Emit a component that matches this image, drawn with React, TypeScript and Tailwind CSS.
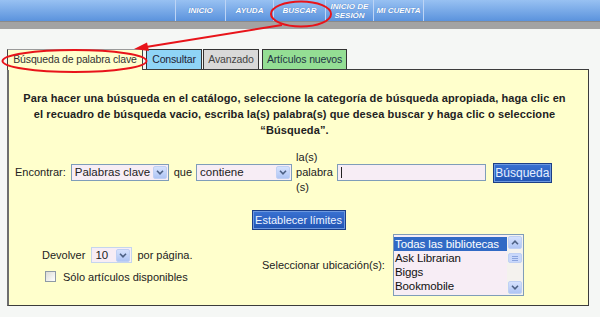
import React from 'react';

const NAV_ITEMS = [
  { key: 'inicio', lines: ['INICIO'], width: 'w-[50px]' },
  { key: 'ayuda', lines: ['AYUDA'], width: 'w-[48px]' },
  { key: 'buscar', lines: ['BUSCAR'], width: 'w-[52px]' },
  { key: 'sesion', lines: ['INICIO DE', 'SESIÓN'], width: 'w-[48px]' },
  { key: 'cuenta', lines: ['MI CUENTA'], width: 'w-[50px]' },
];

const LOCATIONS = ['Todas las bibliotecas', 'Ask Librarian', 'Biggs', 'Bookmobile'];

function Chevron({ up = false }: { up?: boolean }) {
  return (
    <svg width="8" height="5" viewBox="0 0 8 5">
      <path
        d={up ? 'M1 4.2 L4 1.2 L7 4.2' : 'M1 0.8 L4 3.8 L7 0.8'}
        fill="none"
        stroke="#4d6185"
        strokeWidth="1.6"
      />
    </svg>
  );
}

function ArrowBox({ up = false }: { up?: boolean }) {
  return (
    <span className="flex h-[13px] w-[14px] shrink-0 items-center justify-center rounded-[2px] border border-[#bfd0f4] bg-gradient-to-b from-[#d6e2fd] to-[#afc5f4]">
      <Chevron up={up} />
    </span>
  );
}

function Combo({ text, className }: { text: string; className: string }) {
  return (
    <div
      className={`flex h-[17px] items-center justify-between border border-[#7f9db9] bg-[#f7edf5] pl-[3px] pr-px text-[11.5px] text-[#222] ${className}`}
    >
      <span className="leading-none">{text}</span>
      <ArrowBox />
    </div>
  );
}

export default function App() {
  return (
    <div className="relative h-[317px] w-[600px] overflow-hidden bg-[#f5f7f5] font-['Liberation_Sans',Arial,sans-serif] text-[#222]">
      {/* top navigation */}
      <div className="flex h-[21px] bg-gradient-to-b from-[#98c1f2] to-[#5b93dd] pl-[175px]">
        {NAV_ITEMS.map(item => (
          <div
            key={item.key}
            className={`flex flex-col items-center justify-center border-l border-[#bdd4f5] text-[8px] font-bold italic leading-[9px] text-white [text-shadow:0_0_1px_#3d6fb8] ${item.width}`}
          >
            {item.lines.map(l => (
              <span key={l}>{l}</span>
            ))}
          </div>
        ))}
        <div className="border-l border-[#bdd4f5]" />
      </div>
      <div className="h-[8px] border-t border-[#8a8a8a] bg-[#a3a3a3]" />

      <div className="pl-[7px] pt-[20px]">
        {/* tabs */}
        <div className="flex h-[20px] items-stretch text-[10.5px] tracking-[-0.15px]">
          <div className="-mb-px flex w-[136px] items-center justify-center border-x border-t border-x-[#444] border-t-[#9a9a9a] bg-[#ffffcc] text-[#333]">
            Búsqueda de palabra clave
          </div>
          <div className="ml-[3px] flex w-[56px] items-center justify-center border-x border-t border-[#333] bg-[#8fd4f6] text-[#223]">
            Consultar
          </div>
          <div className="ml-[1px] flex w-[56px] items-center justify-center border-x border-t border-[#333] bg-[#d9d9d9] text-[#444]">
            Avanzado
          </div>
          <div className="ml-[3px] flex w-[85px] items-center justify-center border-x border-t border-[#333] bg-[#94de94] text-[#234]">
            Artículos nuevos
          </div>
        </div>

        {/* panel */}
        <div className="flex h-[237px] w-[582px] flex-col border border-l-2 border-[#3c3c3c] border-l-[#6e6e6e] bg-[#ffffcc]">
          <p className="mt-[20px] pr-[8px] text-center text-[11px] font-bold leading-[16px] tracking-[0.1px] text-[#222]">
            Para hacer una búsqueda en el catálogo, seleccione la categoría de búsqueda apropiada, haga clic en
            <br />
            el recuadro de búsqueda vacio, escriba la(s) palabra(s) que desea buscar y haga clic o seleccione
            <br />
            “Búsqueda”.
          </p>

          <div className="mt-[12px] flex items-center pl-[6px] text-[11px]">
            <span>Encontrar:</span>
            <Combo text="Palabras clave" className="ml-[5px] w-[98px]" />
            <span className="ml-[5px]">que</span>
            <Combo text="contiene" className="ml-[4px] w-[96px]" />
            <span className="ml-[4px] leading-[15px]">
              la(s)
              <br />
              palabra
              <br />
              (s)
            </span>
            <div className="ml-[4px] flex h-[17px] w-[149px] items-center border border-[#7f9db9] bg-[#f7edf5] pl-[3px]">
              <span className="h-[11px] w-px bg-[#222]" />
            </div>
            <button className="ml-[7px] h-[20px] w-[59px] border border-[#1c3f86] bg-gradient-to-b from-[#3a72d2] to-[#2154b3] text-[12px] leading-none text-[#e6efff] shadow-[inset_0_0_0_1px_#6c98e0]">
              Búsqueda
            </button>
          </div>

          <div className="mt-[15px] flex justify-center">
            <button className="h-[20px] w-[94px] border border-[#1c3f86] bg-gradient-to-b from-[#3a72d2] to-[#2154b3] text-[11px] leading-none text-[#eef4ff] shadow-[inset_0_0_0_1px_#6c98e0]">
              Establecer límites
            </button>
          </div>

          <div className="mt-[4px] flex items-center text-[11px]">
            <div className="ml-[33px] flex w-[220px] flex-col">
              <div className="mt-[2px] flex items-center">
                <span>Devolver</span>
                <div className="ml-[6px] flex h-[16px] w-[41px] items-center justify-between border border-[#c5d5ee] bg-[#f7edf5] pl-[3px] pr-px text-[11.5px]">
                  <span className="leading-none">10</span>
                  <ArrowBox />
                </div>
                <span className="ml-[5px]">por página.</span>
              </div>
              <div className="mt-[5px] flex items-center pl-[3px]">
                <span className="h-[11px] w-[11px] border border-[#8e9aa6] bg-gradient-to-br from-[#dcdcd6] to-white" />
                <span className="ml-[7px]">Sólo artículos disponibles</span>
              </div>
            </div>
            <span className="w-[127px]">Seleccionar ubicación(s):</span>
            <div className="ml-[4px] flex h-[62px] w-[131px] border border-[#7f9db9] bg-[#f7edf5]">
              <div className="flex min-w-0 flex-1 flex-col pt-[2px] text-[11.5px] leading-[14px] tracking-[-0.1px]">
                {LOCATIONS.map((loc, i) => (
                  <span
                    key={loc}
                    className={i === 0 ? 'whitespace-nowrap bg-[#316ac5] pl-px text-white' : 'whitespace-nowrap pl-px text-[#111]'}
                  >
                    {loc}
                  </span>
                ))}
              </div>
              <div className="flex w-[16px] flex-col items-center justify-between bg-[#f4f2ee] p-px">
                <ArrowBox up />
                <span className="-mt-[14px] flex h-[10px] w-[14px] flex-col items-center justify-center gap-px rounded-[2px] border border-[#bfd0f4] bg-[#c9d8fb]">
                  <span className="h-px w-[6px] bg-[#8aa4de]" />
                  <span className="h-px w-[6px] bg-[#8aa4de]" />
                  <span className="h-px w-[6px] bg-[#8aa4de]" />
                </span>
                <ArrowBox />
              </div>
            </div>
          </div>
        </div>
      </div>

      {/* red annotation marks */}
      <svg className="pointer-events-none absolute inset-0" width="600" height="317" viewBox="0 0 600 317">
        <ellipse cx="301" cy="14" rx="30" ry="12.5" fill="none" stroke="#e8141a" strokeWidth="2" />
        <ellipse cx="74.5" cy="61" rx="72" ry="11" fill="none" stroke="#e8141a" strokeWidth="2" />
        <line x1="282" y1="25" x2="146" y2="47" stroke="#e8141a" strokeWidth="2" />
        <polygon points="134,49 147,42.5 149,51" fill="#e8141a" />
      </svg>
    </div>
  );
}
